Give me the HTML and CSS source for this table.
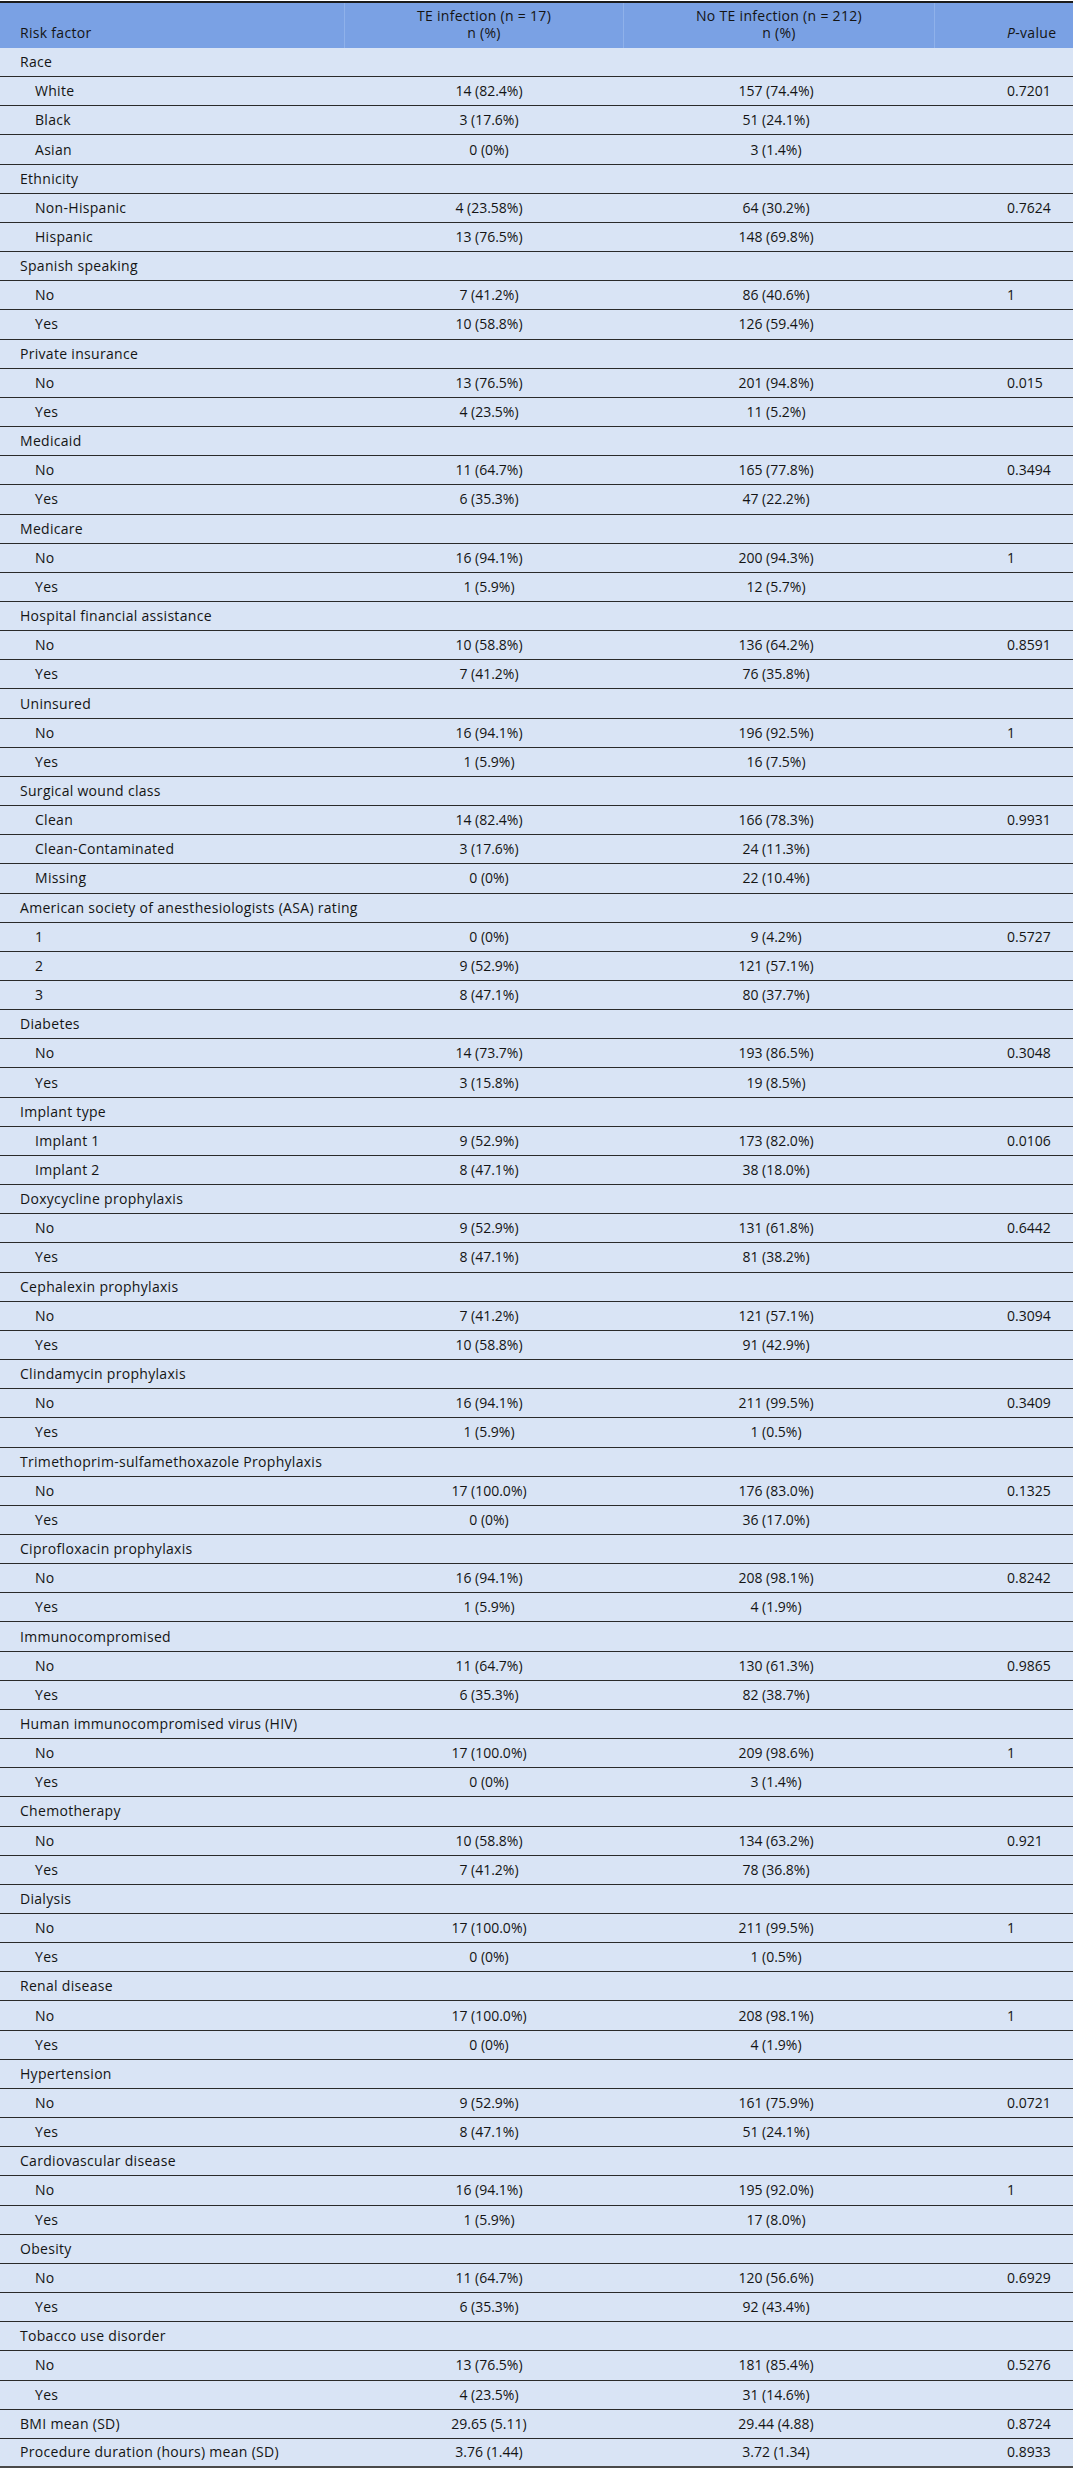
FILE: index.html
```html
<!DOCTYPE html>
<html lang="en">
<head>
<meta charset="utf-8">
<title>Risk factors for TE infection</title>
<link rel="stylesheet" href="styles.css">
</head>
<body>
<div class="page">
<table class="tbl">
<colgroup>
<col class="c1"><col class="c2"><col class="c3"><col class="c4">
</colgroup>
<thead>
<tr>
<th class="h1">Risk factor</th>
<th class="h2">TE infection (n = 17)<br>n (%)</th>
<th class="h3">No TE infection (n = 212)<br>n (%)</th>
<th class="h4"><i>P</i>-value</th>
</tr>
</thead>
<tbody>
<tr class="grp"><td>Race</td><td></td><td></td><td></td></tr>
<tr class="sub"><td>White</td><td>14 (82.4%)</td><td>157 (74.4%)</td><td>0.7201</td></tr>
<tr class="sub"><td>Black</td><td>3 (17.6%)</td><td>51 (24.1%)</td><td></td></tr>
<tr class="sub"><td>Asian</td><td>0 (0%)</td><td>3 (1.4%)</td><td></td></tr>
<tr class="grp"><td>Ethnicity</td><td></td><td></td><td></td></tr>
<tr class="sub"><td>Non-Hispanic</td><td>4 (23.58%)</td><td>64 (30.2%)</td><td>0.7624</td></tr>
<tr class="sub"><td>Hispanic</td><td>13 (76.5%)</td><td>148 (69.8%)</td><td></td></tr>
<tr class="grp"><td>Spanish speaking</td><td></td><td></td><td></td></tr>
<tr class="sub"><td>No</td><td>7 (41.2%)</td><td>86 (40.6%)</td><td>1</td></tr>
<tr class="sub"><td>Yes</td><td>10 (58.8%)</td><td>126 (59.4%)</td><td></td></tr>
<tr class="grp"><td>Private insurance</td><td></td><td></td><td></td></tr>
<tr class="sub"><td>No</td><td>13 (76.5%)</td><td>201 (94.8%)</td><td>0.015</td></tr>
<tr class="sub"><td>Yes</td><td>4 (23.5%)</td><td>11 (5.2%)</td><td></td></tr>
<tr class="grp"><td>Medicaid</td><td></td><td></td><td></td></tr>
<tr class="sub"><td>No</td><td>11 (64.7%)</td><td>165 (77.8%)</td><td>0.3494</td></tr>
<tr class="sub"><td>Yes</td><td>6 (35.3%)</td><td>47 (22.2%)</td><td></td></tr>
<tr class="grp"><td>Medicare</td><td></td><td></td><td></td></tr>
<tr class="sub"><td>No</td><td>16 (94.1%)</td><td>200 (94.3%)</td><td>1</td></tr>
<tr class="sub"><td>Yes</td><td>1 (5.9%)</td><td>12 (5.7%)</td><td></td></tr>
<tr class="grp"><td>Hospital financial assistance</td><td></td><td></td><td></td></tr>
<tr class="sub"><td>No</td><td>10 (58.8%)</td><td>136 (64.2%)</td><td>0.8591</td></tr>
<tr class="sub"><td>Yes</td><td>7 (41.2%)</td><td>76 (35.8%)</td><td></td></tr>
<tr class="grp"><td>Uninsured</td><td></td><td></td><td></td></tr>
<tr class="sub"><td>No</td><td>16 (94.1%)</td><td>196 (92.5%)</td><td>1</td></tr>
<tr class="sub"><td>Yes</td><td>1 (5.9%)</td><td>16 (7.5%)</td><td></td></tr>
<tr class="grp"><td>Surgical wound class</td><td></td><td></td><td></td></tr>
<tr class="sub"><td>Clean</td><td>14 (82.4%)</td><td>166 (78.3%)</td><td>0.9931</td></tr>
<tr class="sub"><td>Clean-Contaminated</td><td>3 (17.6%)</td><td>24 (11.3%)</td><td></td></tr>
<tr class="sub"><td>Missing</td><td>0 (0%)</td><td>22 (10.4%)</td><td></td></tr>
<tr class="grp"><td>American society of anesthesiologists (ASA) rating</td><td></td><td></td><td></td></tr>
<tr class="sub"><td>1</td><td>0 (0%)</td><td>9 (4.2%)</td><td>0.5727</td></tr>
<tr class="sub"><td>2</td><td>9 (52.9%)</td><td>121 (57.1%)</td><td></td></tr>
<tr class="sub"><td>3</td><td>8 (47.1%)</td><td>80 (37.7%)</td><td></td></tr>
<tr class="grp"><td>Diabetes</td><td></td><td></td><td></td></tr>
<tr class="sub"><td>No</td><td>14 (73.7%)</td><td>193 (86.5%)</td><td>0.3048</td></tr>
<tr class="sub"><td>Yes</td><td>3 (15.8%)</td><td>19 (8.5%)</td><td></td></tr>
<tr class="grp"><td>Implant type</td><td></td><td></td><td></td></tr>
<tr class="sub"><td>Implant 1</td><td>9 (52.9%)</td><td>173 (82.0%)</td><td>0.0106</td></tr>
<tr class="sub"><td>Implant 2</td><td>8 (47.1%)</td><td>38 (18.0%)</td><td></td></tr>
<tr class="grp"><td>Doxycycline prophylaxis</td><td></td><td></td><td></td></tr>
<tr class="sub"><td>No</td><td>9 (52.9%)</td><td>131 (61.8%)</td><td>0.6442</td></tr>
<tr class="sub"><td>Yes</td><td>8 (47.1%)</td><td>81 (38.2%)</td><td></td></tr>
<tr class="grp"><td>Cephalexin prophylaxis</td><td></td><td></td><td></td></tr>
<tr class="sub"><td>No</td><td>7 (41.2%)</td><td>121 (57.1%)</td><td>0.3094</td></tr>
<tr class="sub"><td>Yes</td><td>10 (58.8%)</td><td>91 (42.9%)</td><td></td></tr>
<tr class="grp"><td>Clindamycin prophylaxis</td><td></td><td></td><td></td></tr>
<tr class="sub"><td>No</td><td>16 (94.1%)</td><td>211 (99.5%)</td><td>0.3409</td></tr>
<tr class="sub"><td>Yes</td><td>1 (5.9%)</td><td>1 (0.5%)</td><td></td></tr>
<tr class="grp"><td>Trimethoprim-sulfamethoxazole Prophylaxis</td><td></td><td></td><td></td></tr>
<tr class="sub"><td>No</td><td>17 (100.0%)</td><td>176 (83.0%)</td><td>0.1325</td></tr>
<tr class="sub"><td>Yes</td><td>0 (0%)</td><td>36 (17.0%)</td><td></td></tr>
<tr class="grp"><td>Ciprofloxacin prophylaxis</td><td></td><td></td><td></td></tr>
<tr class="sub"><td>No</td><td>16 (94.1%)</td><td>208 (98.1%)</td><td>0.8242</td></tr>
<tr class="sub"><td>Yes</td><td>1 (5.9%)</td><td>4 (1.9%)</td><td></td></tr>
<tr class="grp"><td>Immunocompromised</td><td></td><td></td><td></td></tr>
<tr class="sub"><td>No</td><td>11 (64.7%)</td><td>130 (61.3%)</td><td>0.9865</td></tr>
<tr class="sub"><td>Yes</td><td>6 (35.3%)</td><td>82 (38.7%)</td><td></td></tr>
<tr class="grp"><td>Human immunocompromised virus (HIV)</td><td></td><td></td><td></td></tr>
<tr class="sub"><td>No</td><td>17 (100.0%)</td><td>209 (98.6%)</td><td>1</td></tr>
<tr class="sub"><td>Yes</td><td>0 (0%)</td><td>3 (1.4%)</td><td></td></tr>
<tr class="grp"><td>Chemotherapy</td><td></td><td></td><td></td></tr>
<tr class="sub"><td>No</td><td>10 (58.8%)</td><td>134 (63.2%)</td><td>0.921</td></tr>
<tr class="sub"><td>Yes</td><td>7 (41.2%)</td><td>78 (36.8%)</td><td></td></tr>
<tr class="grp"><td>Dialysis</td><td></td><td></td><td></td></tr>
<tr class="sub"><td>No</td><td>17 (100.0%)</td><td>211 (99.5%)</td><td>1</td></tr>
<tr class="sub"><td>Yes</td><td>0 (0%)</td><td>1 (0.5%)</td><td></td></tr>
<tr class="grp"><td>Renal disease</td><td></td><td></td><td></td></tr>
<tr class="sub"><td>No</td><td>17 (100.0%)</td><td>208 (98.1%)</td><td>1</td></tr>
<tr class="sub"><td>Yes</td><td>0 (0%)</td><td>4 (1.9%)</td><td></td></tr>
<tr class="grp"><td>Hypertension</td><td></td><td></td><td></td></tr>
<tr class="sub"><td>No</td><td>9 (52.9%)</td><td>161 (75.9%)</td><td>0.0721</td></tr>
<tr class="sub"><td>Yes</td><td>8 (47.1%)</td><td>51 (24.1%)</td><td></td></tr>
<tr class="grp"><td>Cardiovascular disease</td><td></td><td></td><td></td></tr>
<tr class="sub"><td>No</td><td>16 (94.1%)</td><td>195 (92.0%)</td><td>1</td></tr>
<tr class="sub"><td>Yes</td><td>1 (5.9%)</td><td>17 (8.0%)</td><td></td></tr>
<tr class="grp"><td>Obesity</td><td></td><td></td><td></td></tr>
<tr class="sub"><td>No</td><td>11 (64.7%)</td><td>120 (56.6%)</td><td>0.6929</td></tr>
<tr class="sub"><td>Yes</td><td>6 (35.3%)</td><td>92 (43.4%)</td><td></td></tr>
<tr class="grp"><td>Tobacco use disorder</td><td></td><td></td><td></td></tr>
<tr class="sub"><td>No</td><td>13 (76.5%)</td><td>181 (85.4%)</td><td>0.5276</td></tr>
<tr class="sub"><td>Yes</td><td>4 (23.5%)</td><td>31 (14.6%)</td><td></td></tr>
<tr class="grp"><td>BMI mean (SD)</td><td>29.65 (5.11)</td><td>29.44 (4.88)</td><td>0.8724</td></tr>
<tr class="grp last"><td>Procedure duration (hours) mean (SD)</td><td>3.76 (1.44)</td><td>3.72 (1.34)</td><td>0.8933</td></tr>
</tbody>
</table>
</div>
</body>
</html>
```

FILE: styles.css
```css
html, body {
  margin: 0;
  padding: 0;
  background: #ffffff;
}

body {
  font-family: "Open Sans", "Noto Sans", "Liberation Sans", sans-serif;
  font-size: 14px;
  color: #141414;
}

.page {
  padding-top: 1px;
  padding-bottom: 1px;
}

.tbl {
  width: 1073px;
  table-layout: fixed;
  border-collapse: separate;
  border-spacing: 0;
  border-top: 2px solid #1c1c1c;
}

.c1 { width: 344px; }
.c2 { width: 279px; }
.c3 { width: 311px; }
.c4 { width: 139px; }

.tbl th {
  height: 45px;
  padding: 0 0 7px 0;
  box-sizing: border-box;
  background: #7aa1e4;
  font-weight: normal;
  line-height: 17px;
  vertical-align: bottom;
  text-align: center;
  letter-spacing: 0.3px;
}

.tbl th + th {
  border-left: 1px solid #8fb1ea;
}

.tbl th.h1 {
  text-align: left;
  padding-left: 20px;
}

.tbl th.h4 {
  text-align: left;
  padding-left: 72px;
}

.tbl tbody tr {
  height: 29.157px;
}

.tbl td {
  padding: 0;
  background: #d9e4f5;
  border-bottom: 1px solid #2a2a2a;
  vertical-align: middle;
  text-align: center;
  line-height: 18px;
  white-space: nowrap;
}

.tbl td:first-child {
  text-align: left;
  padding-left: 20px;
  letter-spacing: 0.3px;
}

.tbl tr.sub td:first-child {
  padding-left: 35px;
}

.tbl td:nth-child(2) {
  padding-left: 11px;
}

.tbl td:nth-child(3) {
  padding-right: 5px;
}

.tbl td:last-child {
  text-align: left;
  padding-left: 73px;
}

.tbl tr.last td {
  border-bottom: 2px solid #4a4a4a;
}
```
